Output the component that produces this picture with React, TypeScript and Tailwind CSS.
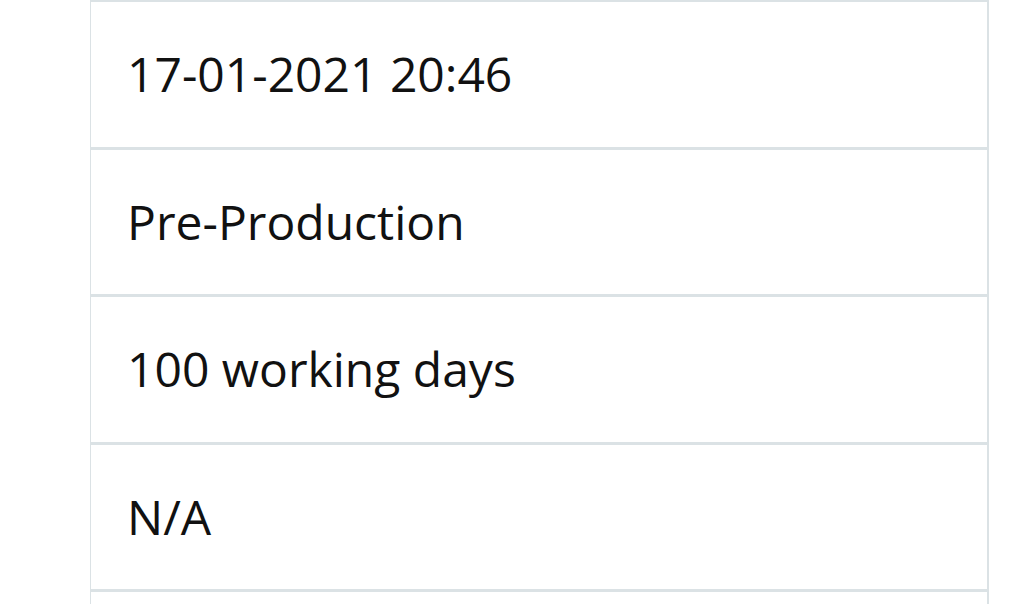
const ROWS = ['17-01-2021 20:46', 'Pre-Production', '100 working days', 'N/A', '']

export default function App() {
  return (
    <div className="h-[604px] w-[1028px] overflow-hidden bg-white">
      <div className="ml-[90px] w-[899px] border-l border-r-2 border-t-2 border-[#dbe2e5]">
        {ROWS.map((label, i) => (
          <div
            key={i}
            className="flex h-[147.5px] items-center border-b-[3px] border-[#dbe2e5] pl-[36px] text-[48px] text-[#111] [font-family:'Open_Sans',sans-serif]"
          >
            {label}
          </div>
        ))}
      </div>
    </div>
  )
}
